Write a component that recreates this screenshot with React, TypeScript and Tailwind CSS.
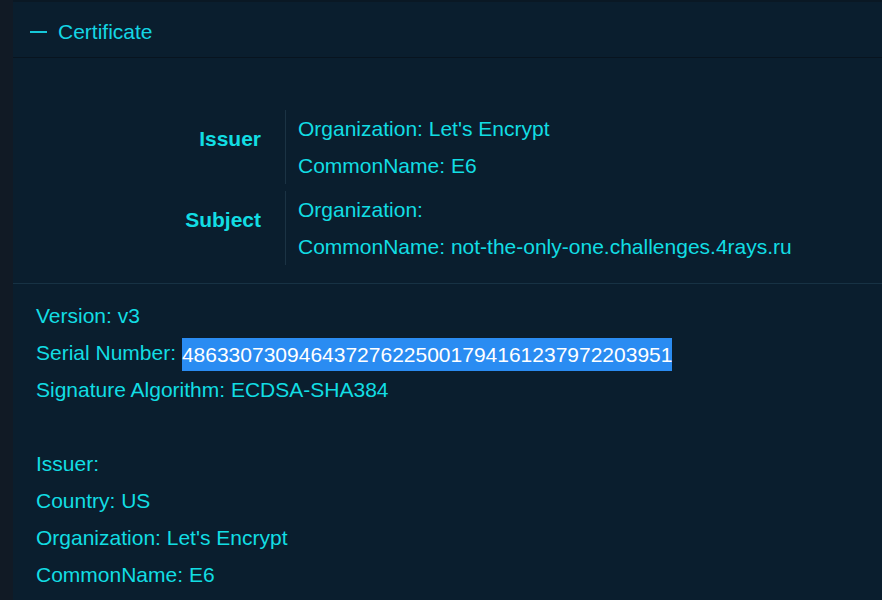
const tableRows = [
  {
    label: "Issuer",
    values: [
      ["Organization:", "Let's Encrypt"],
      ["CommonName:", "E6"],
    ],
  },
  {
    label: "Subject",
    values: [
      ["Organization:", ""],
      ["CommonName:", "not-the-only-one.challenges.4rays.ru"],
    ],
  },
]

export default function App() {
  return (
    <div
      className="flex min-h-[600px] w-full bg-[#0a1e2e] text-[21px] text-[#12dde3]"
      style={{ fontFamily: '"Liberation Sans", Arial, sans-serif' }}
    >
      <div className="w-[13px] shrink-0 bg-[#111a25]" />
      <div className="flex-1 border-t-2 border-[#0a1824]">
        <div className="flex h-[56px] items-center gap-[11px] border-b border-[#08141f] pl-[17px] pt-[4px]">
          <span className="h-[2px] w-[17px] bg-[#16c8d8]" />
          <span className="text-[#14d6e4]">Certificate</span>
        </div>

        <div className="flex flex-col gap-[7px] border-b border-[#173244] pt-[52px] pb-[18px]">
          {tableRows.map((row) => (
            <div key={row.label} className="flex items-center">
              <div className="w-[272px] pb-[16px] pr-[24px] text-right font-bold">{row.label}</div>
              <div className="border-l border-[#1b3344] pl-[12px] leading-[37px]">
                {row.values.map(([k, v]) => (
                  <div key={k}>
                    {k} {v}
                  </div>
                ))}
              </div>
            </div>
          ))}
        </div>

        <div className="pl-[23px] pt-[13px] leading-[37px]">
          <div>Version: v3</div>
          <div>
            Serial Number:{" "}
            <span className="inline-block h-[33px] bg-[#2a8cf2] align-middle leading-[33px] text-white">
              486330730946437276225001794161237972203951
            </span>
          </div>
          <div>Signature Algorithm: ECDSA-SHA384</div>
          <div className="h-[37px]" />
          <div>Issuer:</div>
          <div>Country: US</div>
          <div>Organization: Let's Encrypt</div>
          <div>CommonName: E6</div>
        </div>
      </div>
    </div>
  )
}
